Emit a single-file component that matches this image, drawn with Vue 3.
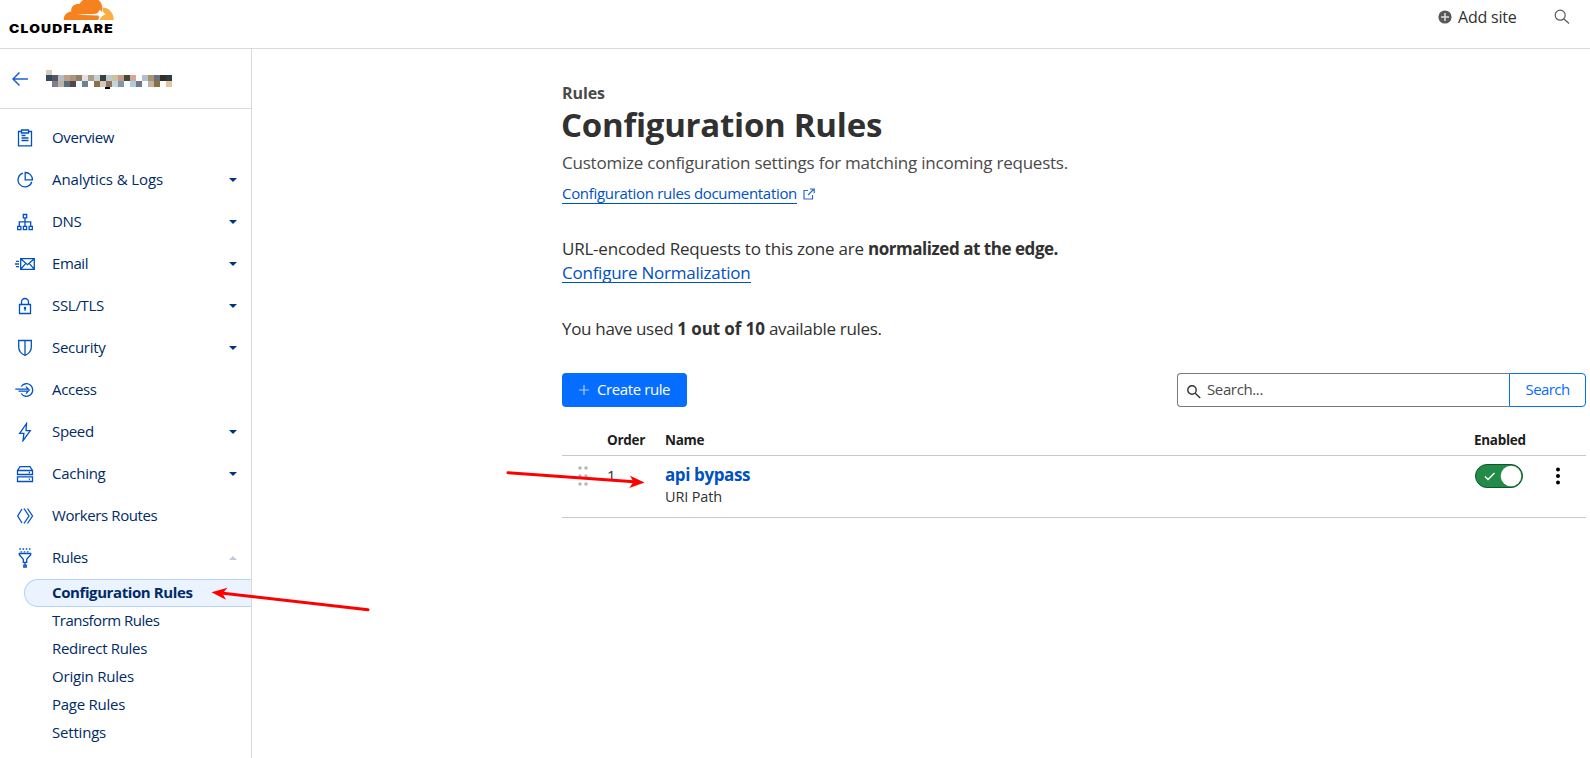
<script setup>
const icons = {
  overview: '<path d="M6.5 3.5h-3v14.3h13V3.5h-3M6.5 2h7v3h-7zM6.5 7.5h4M6.5 10h7M6.5 12.5h7"/>',
  analytics: '<path d="M8 3.2a7 7 0 1 0 8.8 8.6"/><path d="M10.2 2.5v7.3h7.3a7.3 7.3 0 0 0-7.3-7.3z"/>',
  dns: '<path d="M8.3 2.5h3.4v3.4H8.3zM2.7 14.4h3.2v3.2H2.7zM8.4 14.4h3.2v3.2H8.4zM14.1 14.4h3.2v3.2h-3.2zM10 5.9v8.5M4.3 14.4V9.8h11.4v4.6"/>',
  email: '<path d="M5.7 4.7h13.6v10.6H5.7zM5.7 4.7l6.8 6 6.8-6M5.7 15.3l5-6M19.3 15.3l-5-6M1 7.3h3M0 10h4M1 12.7h3"/>',
  ssl: '<path d="M4.5 8.5h11v9h-11zM6.5 8.5V6a3.5 3.5 0 0 1 7 0v2.5M10 12.5v2.2"/><circle cx="10" cy="12" r=".6"/>',
  security: '<path d="M3.7 2.5h12.6v6.5c0 4.5-3 7-6.3 8.5-3.3-1.5-6.3-4-6.3-8.5zM10 2.5v15"/>',
  access: '<path d="M6.2 6.5a6.3 6.3 0 1 1 0 7M.3 9.2h13.2M3.5 11.2h10M11 6.6l3.2 3.5-3.2 3.5"/>',
  speed: '<path d="M11.5 1.5L4.7 11.3h4.2L8 18.7l7.3-10H11z"/>',
  caching: '<path d="M2.5 6.5L5 2.7h10l2.5 3.8M2.5 6.5h15v4h-15zM2.5 12.8h15v4.7h-15zM13.7 8.5h1.3M13.7 15.2h1.3"/>',
  workers: '<path d="M7 3L2.7 10 7 17M9 2.5l5 7.5-5 7.5M12.5 2.5l5 7.5-5 7.5"/>',
  rules: '<path d="M4.3 1h11.4M5.5 3.8h9" stroke-dasharray="1.6 1.6"/><path d="M4.3 5.5h11.4v1.3l-4 4.5v3H8.3v-3l-4-4.5zM10 14v2.5M8.8 17.2h2.4v1.8H8.8z"/>',
}
const nav = [
  { label: 'Overview', icon: 'overview', track: -0.38 },
  { label: 'Analytics & Logs', icon: 'analytics', caret: 'down', track: -0.1 },
  { label: 'DNS', icon: 'dns', caret: 'down', track: -0.3 },
  { label: 'Email', icon: 'email', caret: 'down', track: -0.4 },
  { label: 'SSL/TLS', icon: 'ssl', caret: 'down', track: -0.3 },
  { label: 'Security', icon: 'security', caret: 'down', track: -0.3 },
  { label: 'Access', icon: 'access', track: -0.32 },
  { label: 'Speed', icon: 'speed', caret: 'down', track: -0.34 },
  { label: 'Caching', icon: 'caching', caret: 'down', track: -0.26 },
  { label: 'Workers Routes', icon: 'workers', track: -0.4 },
  { label: 'Rules', icon: 'rules', caret: 'up', track: -0.4 },
]
const sub = [
  { label: 'Configuration Rules', track: -0.4 },
  { label: 'Transform Rules', track: -0.5 },
  { label: 'Redirect Rules', track: -0.32 },
  { label: 'Origin Rules', track: -0.2 },
  { label: 'Page Rules', track: -0.26 },
  { label: 'Settings', track: -0.2 },
]
const tracking = (t) => ({ letterSpacing: t + 'px' })

const rowA = ['#34495e', '#57555f', '#b5bdc4', '#bf9f8a', '#a8967f', '#947c69', '#eadfdc', '#a99e8c', '#c5d2d2', '#3a3f40', '#bfc8cc', '#cbc39d', '#c49d8a', '#434a35', '#d5a796', '#fdfdfd', '#b3c1cb', '#a89472', '#6a707d', '#352e27', '#2d3c47']
const rowB = ['#fff', '#827f8c', '#beb5a1', '#55707a', '#56454b', '#f2fbfe', '#6b8294', '#fff', '#8a714c', '#d4c8c0', '#8e735f', '#c5d5de', '#8197a9', '#fafdff', '#a9cdd9', '#737786', '#f8ffff', '#bfb5a6', '#8b6f47', '#fff', '#e2c5a0']
</script>

<template>
  <div class="page">
    <header class="top">
      <div class="brand">
        <svg class="cloud" width="52" height="20" viewBox="0 0 52 20">
          <path fill="#f6821f" d="M.7 20C.7 15.5 3.500 12 8.300 11.500 7.500 7 11 3.500 16.500 4 17.500 2 19 .5 21-.5h13.500C38 1.500 39.500 5 39.300 8.500L38.500 12 35 20z" />
          <path fill="#fbad41" d="M39.700 7.500C46 7.500 50.800 13 50.800 20H36.500L38 17l4-2.700-2.500-3.300z" />
          <path fill="#fff" d="M14 14.700c6-.8 16-.4 20-1.200L37.200 9.500l1.600 3.500 4 1.300-3.800 1.500-1.500 3-2.500-3.300z" />
        </svg>
        <span class="wordmark">CLOUDFLARE</span>
      </div>
      <div class="actions">
        <svg width="14" height="14" viewBox="0 0 14 14"><circle cx="7" cy="7" r="6.600" fill="#595959" /><path d="M7 3v8M3 7h8" stroke="#e0e0e0" stroke-width="1.500" /></svg>
        <span class="add">Add site</span>
        <svg width="16" height="16" viewBox="0 0 16 16" fill="none" stroke="#595959" stroke-width="1.200"><circle cx="6.200" cy="6.200" r="5" /><path d="M10 10l5 4.500" /></svg>
      </div>
    </header>

    <div class="body">
      <aside class="side">
        <div class="zone">
          <svg width="17" height="16" viewBox="0 0 17 16" fill="none" stroke="#1d5fd0" stroke-width="1.500"><path d="M7.500 1.500L1 8l6.500 6.500M1 8H16" /></svg>
          <svg class="mosaic" width="127" height="20" viewBox="0 0 127 20" shape-rendering="crispEdges">
            <rect x="0" y="0" width="6" height="5" fill="#d6ccbb" />
            <rect v-for="(c, i) in rowA" :key="'a' + i" :x="i * 6" y="5" width="6" height="6" :fill="c" />
            <rect v-for="(c, i) in rowB" :key="'b' + i" :x="i * 6" y="11" width="6" height="6" :fill="c" />
            <rect x="59" y="17" width="5" height="2" fill="#000" />
          </svg>
        </div>
        <nav>
          <a v-for="n in nav" :key="n.label" class="item">
            <svg class="ico" width="20" height="20" viewBox="0 0 20 20" v-html="icons[n.icon]" />
            <span class="label" :style="tracking(n.track)">{{ n.label }}</span>
            <svg v-if="n.caret" class="caret" :class="n.caret" width="8" height="4" viewBox="0 0 8 4"><path d="M0 0h8L4 4z" /></svg>
          </a>
          <a v-for="(s, i) in sub" :key="s.label" class="sub" :class="{ active: i === 0 }" :style="tracking(s.track)">{{ s.label }}</a>
        </nav>
      </aside>

      <main class="main">
        <p class="crumb">Rules</p>
        <h1>Configuration Rules</h1>
        <p class="lead">Customize configuration settings for matching incoming requests.</p>
        <p class="doc">
          <a>Configuration rules documentation</a>
          <svg width="12" height="12" viewBox="0 0 12 12" fill="none" stroke="#2c68d0" stroke-width="1.200"><path d="M5 2.500H1v8.500h8.500V7M7 1h4.200v4.200M11 1L5 7" /></svg>
        </p>
        <p class="norm">URL-encoded Requests to this zone are <b>normalized at the edge.</b></p>
        <p class="conf"><a>Configure Normalization</a></p>
        <p class="used">You have used <b>1 out of 10</b> available rules.</p>

        <div class="tools">
          <button class="create">
            <svg width="10" height="10" viewBox="0 0 10 10" stroke="#a9cbff" stroke-width="1.200"><path d="M5 0v10M0 5h10" /></svg>
            <span>Create rule</span>
          </button>
          <div class="search">
            <div class="field">
              <svg width="14" height="14" viewBox="0 0 14 14" fill="none" stroke="#313131" stroke-width="1.400"><circle cx="5" cy="5" r="4.200" /><path d="M8.200 8.200l5 4.800" /></svg>
              <span>Search...</span>
            </div>
            <button class="go">Search</button>
          </div>
        </div>

        <div class="table">
          <div class="row head">
            <span></span>
            <span>Order</span>
            <span>Name</span>
            <span>Enabled</span>
          </div>
          <div class="row rule">
            <span class="grip"><svg width="10" height="20" viewBox="0 0 10 20" fill="#b8b8b8"><circle v-for="k in 6" :key="k" :cx="k % 2 ? 2 : 8" :cy="2 + Math.floor((k - 1) / 2) * 8" r="1.800" /></svg></span>
            <span class="num">1</span>
            <span class="name">
              <b>api bypass</b>
              <span>URI Path</span>
            </span>
            <span class="toggle">
              <svg width="48" height="24" viewBox="0 0 48 24"><rect x=".5" y=".5" width="47" height="23" rx="11.500" fill="#228b49" stroke="#14532c" /><circle cx="36" cy="12" r="10.300" fill="#fff" /><path d="M10 12.500l3 3 6.500-6.500" fill="none" stroke="#fff" stroke-width="1.400" /></svg>
            </span>
            <span class="more"><svg width="4" height="18" viewBox="0 0 4 18"><circle cx="2" cy="2.500" r="2" /><circle cx="2" cy="9" r="2" /><circle cx="2" cy="15.500" r="2" /></svg></span>
          </div>
        </div>
      </main>
    </div>

    <svg class="marks" width="1590" height="758" viewBox="0 0 1590 758" fill="#f00">
      <path d="M368 609.800L221 593" stroke="#f00" stroke-width="3" stroke-linecap="round" />
      <path d="M211.500 592.300L227.500 587.700 222.500 593.500 226 599.700z" />
      <path d="M508 472.700L634 481.800" stroke="#f00" stroke-width="3" stroke-linecap="round" />
      <path d="M644.500 482.500L630 475.700 633.500 481.800 629.300 488z" />
    </svg>
  </div>
</template>

<style>
body { margin: 0; overflow: hidden; background: #fff; }
</style>

<style scoped>
.page { position: relative; width: 1590px; height: 758px; overflow: hidden; font-family: "Open Sans", "Noto Sans", sans-serif; font-size: 15px; color: #313131; display: flex; flex-direction: column; box-sizing: border-box; }
.page * { box-sizing: border-box; }
p, h1 { margin: 0; white-space: nowrap; }
svg { display: block; flex: none; }
span, a, b { white-space: nowrap; }
button { font: inherit; padding: 0; margin: 0; }
.top { height: 49px; border-bottom: 1px solid #d9d9d9; display: flex; justify-content: space-between; flex: none; }
.brand { padding-left: 9px; }
.cloud { margin-left: 54px; }
.wordmark { display: block; width: 95px; font: 900 12px/14px Inter, sans-serif; letter-spacing: 1.050px; color: #000; margin-top: 1.500px; transform: scaleX(1.150); transform-origin: 0 0; }
.actions { display: flex; align-items: center; height: 34px; padding-right: 20px; }
.add { font-size: 16px; width: 96px; margin-left: 6px; letter-spacing: -0.210px; }
.body { display: flex; flex: 1; min-height: 0; }
.side { width: 252px; border-right: 1px solid #d9d9d9; flex: none; }
.zone { height: 60px; border-bottom: 1px solid #d9d9d9; display: flex; padding: 22px 0 0 12px; }
.mosaic { margin: -1px 0 0 17px; }
nav { padding-top: 8px; color: #002b66; }
.item { height: 42px; display: flex; align-items: center; padding: 0 14px 0 15px; }
.ico { fill: none; stroke: #0051c3; stroke-width: 1.300; }
.label { margin-left: 17px; flex: 1; padding-bottom: 2px; }
.caret { fill: #003681; }
.caret.up { fill: #c0c9d8; transform: rotate(180deg); }
.sub { display: flex; align-items: center; height: 28px; margin-left: 24px; padding: 0 0 2px 28px; }
.active { font-weight: 700; background: #ebf3ff; border: 1px solid #b3d2fc; border-right: 0; border-radius: 14px 0 0 14px; padding-left: 27px; }
.main { flex: 1; padding: 32px 4px 0 310px; }
.crumb { font-size: 16px; line-height: 24px; font-weight: 700; color: #4a4a4a; letter-spacing: -0.080px; }
h1 { font-size: 33px; line-height: 40px; font-weight: 700; letter-spacing: -0.250px; text-indent: -1px; }
.lead { font-size: 17px; line-height: 24px; margin-top: 6px; color: #4a4a4a; letter-spacing: -0.223px; }
.doc { display: flex; align-items: center; gap: 6px; margin-top: 8px; color: #0051c3; letter-spacing: -0.312px; }
.doc a { line-height: 20px; border-bottom: 1px solid #0051c3; }
.norm { font-size: 17px; line-height: 24px; margin-top: 33px; letter-spacing: -0.220px; }
.norm b { letter-spacing: -0.463px; }
.conf { font-size: 17px; line-height: 24px; height: 24px; color: #0051c3; letter-spacing: -0.244px; }
.conf a { display: inline-block; line-height: 24px; height: 22px; border-bottom: 1px solid #0051c3; }
.used { font-size: 17px; line-height: 24px; margin-top: 32px; letter-spacing: -0.320px; }
.used b { letter-spacing: -0.100px; }
.tools { display: flex; justify-content: space-between; margin-top: 32px; height: 34px; }
.create { width: 125px; background: #056dff; color: #fff; border: 0; border-radius: 4px; display: flex; align-items: center; padding-left: 17px; gap: 8px; letter-spacing: -0.400px; }
.create span { padding-bottom: 2px; }
.search { width: 409px; display: flex; }
.field { flex: 1; border: 1px solid #797979; border-right: 0; border-radius: 4px 0 0 4px; display: flex; align-items: center; padding-left: 9px; gap: 6px; color: #4a4a4a; letter-spacing: -0.370px; }
.field svg { margin-top: 4px; }
.field span { padding-bottom: 2px; }
.go { width: 77px; border: 1px solid #056dff; background: #fff; color: #056dff; border-radius: 0 4px 4px 0; padding-bottom: 2px; letter-spacing: -0.580px; }
.row { display: grid; grid-template-columns: 45px 58px 809px 75px 1fr; border-bottom: 1px solid #c9c9c9; }
.head { font-size: 13.500px; font-weight: 700; color: #1d1d1d; height: 49px; padding-top: 24px; letter-spacing: -0.280px; }
.rule { height: 62px; }
.grip { padding: 10px 0 0 16px; }
.num { line-height: 20px; padding-top: 9px; }
.name b { display: block; font-size: 17px; line-height: 22px; padding-top: 8px; color: #0051c3; letter-spacing: -0.400px; }
.name span { display: block; line-height: 20px; padding-top: 1px; font-size: 14.500px; letter-spacing: -0.150px; }
.toggle { padding-top: 8px; padding-left: 1px; }
.more { padding: 11px 0 0 7px; }
.marks { position: absolute; left: 0; top: 0; pointer-events: none; }
</style>
